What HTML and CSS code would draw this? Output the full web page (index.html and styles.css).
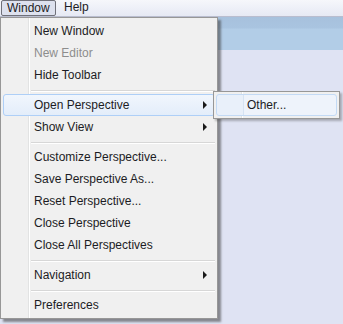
FILE: index.html
```html
<!DOCTYPE html>
<html>
<head>
  <link rel="stylesheet" href="styles.css">
</head>
<body>
  <div class="menubar">
    <span class="top-item open">Window</span>
    <span class="top-item">Help</span>
  </div>
  <div class="workbench">
    <div class="tab-band"></div>
  </div>

  <div class="menu">
    <div class="item">New Window</div>
    <div class="item disabled">New Editor</div>
    <div class="item">Hide Toolbar</div>
    <div class="sep"></div>
    <div class="item active sub">Open Perspective</div>
    <div class="item sub">Show View</div>
    <div class="sep"></div>
    <div class="item">Customize Perspective...</div>
    <div class="item">Save Perspective As...</div>
    <div class="item">Reset Perspective...</div>
    <div class="item">Close Perspective</div>
    <div class="item">Close All Perspectives</div>
    <div class="sep"></div>
    <div class="item sub">Navigation</div>
    <div class="sep"></div>
    <div class="item">Preferences</div>
  </div>

  <div class="menu submenu">
    <div class="item active">Other...</div>
  </div>
</body>
</html>
```

FILE: styles.css
```css
body {
  margin: 0;
  width: 343px;
  height: 324px;
  overflow: hidden;
  background-color: #dfe3f3;
  font-family: "Liberation Sans", Arial, sans-serif;
  font-size: 12px;
  color: #1c1c24;
}

.menubar {
  height: 16px;
  border-bottom: 1px solid #b9bdcf;
  background: linear-gradient(#f6f7fb, #e6e9f4);
  display: flex;
  align-items: stretch;
}

.top-item {
  line-height: 15px;
  padding: 0 5px;
  margin-left: 3px;
}

.top-item.open {
  margin-left: 1px;
  width: 43px;
  border: 1px solid #6f7079;
  border-radius: 2px;
  background: #dde1ee;
  line-height: 14px;
}

.workbench {
  height: 307px;
}

.tab-band {
  height: 33px;
  background: linear-gradient(#a7c1dd 0, #a9c4e0 11px, #b2cde7 12px, #b2cde7 100%);
}

.menu {
  position: absolute;
  left: 0;
  top: 17px;
  width: 212px;
  padding: 2px;
  border: 1px solid #979797;
  background: linear-gradient(to right, #f0f0f0 0, #f0f0f0 27px, #e2e3e3 27px, #e2e3e3 28px, #ffffff 28px, #ffffff 29px, #f0f0f0 29px);
  box-shadow: 3px 3px 2px rgba(60, 60, 60, 0.55);
}

.item {
  position: relative;
  height: 22px;
  line-height: 22px;
  padding-left: 31px;
  white-space: nowrap;
}

.item.disabled {
  color: #8d8d8d;
}

.item.active {
  height: 20px;
  line-height: 20px;
  padding-left: 30px;
  border: 1px solid #aecff7;
  border-radius: 3px;
  background: linear-gradient(#f1f6fd, #e3edfa);
}

.item.sub::after {
  content: "";
  position: absolute;
  right: 8px;
  top: 7px;
  border-left: 4px solid #1a1a1a;
  border-top: 4px solid transparent;
  border-bottom: 4px solid transparent;
}

.item.active.sub::after {
  top: 6px;
  right: 7px;
}

.sep {
  height: 0;
  margin: 4px 0 2px 28px;
  border-top: 1px solid #d7d7d7;
  border-bottom: 1px solid #ffffff;
}

.submenu {
  left: 213px;
  top: 91px;
  width: 121px;
  box-shadow: 2px 2px 2px rgba(60, 60, 60, 0.35);
}

.submenu .item.active {
  border-color: #c3daf5;
  background: linear-gradient(to right, #e9f0fa 0, #e9f0fa 26px, #d6e3f3 26px, #d6e3f3 27px, #eef3fb 27px);
}
```
